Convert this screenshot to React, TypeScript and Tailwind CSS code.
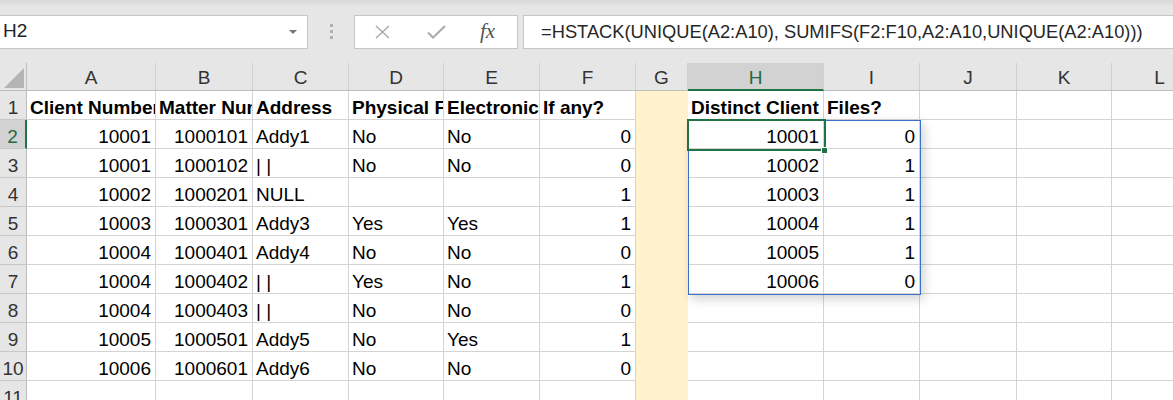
import clsx from "clsx";

const cols = [
  { k: "A", w: 129 },
  { k: "B", w: 97 },
  { k: "C", w: 96 },
  { k: "D", w: 95 },
  { k: "E", w: 96 },
  { k: "F", w: 96 },
  { k: "G", w: 52 },
  { k: "H", w: 136 },
  { k: "I", w: 96 },
  { k: "J", w: 97 },
  { k: "K", w: 95 },
  { k: "L", w: 96 },
  { k: "M", w: 96 },
];

type V = string | number;

const rows: V[][] = [
  ["Client Number", "Matter Number", "Address", "Physical Files", "Electronic Files", "If any?", "", "Distinct Client", "Files?"],
  [10001, 1000101, "Addy1", "No", "No", 0, "", 10001, 0],
  [10001, 1000102, "| |", "No", "No", 0, "", 10002, 1],
  [10002, 1000201, "NULL", "", "", 1, "", 10003, 1],
  [10003, 1000301, "Addy3", "Yes", "Yes", 1, "", 10004, 1],
  [10004, 1000401, "Addy4", "No", "No", 0, "", 10005, 1],
  [10004, 1000402, "| |", "Yes", "No", 1, "", 10006, 0],
  [10004, 1000403, "| |", "No", "No", 0],
  [10005, 1000501, "Addy5", "No", "Yes", 1],
  [10006, 1000601, "Addy6", "No", "No", 0],
  [],
];

function FormulaBar() {
  return (
    <div className="h-[63px] flex items-center bg-[linear-gradient(#d9d9d9,#e6e6e6_7px)]">
      <div className="w-[308px] h-[34px] bg-white border border-[#c6c6c6] border-l-0 flex items-center justify-between pl-[3px] pr-[10px] text-[19px] text-[#222]">
        <span>H2</span>
        <svg width="8" height="4" viewBox="0 0 8 4"><path d="M0 0h8L4 4z" fill="#777" /></svg>
      </div>
      <div className="w-[46px] flex flex-col items-center gap-[3px]">
        <div className="w-[3px] h-[3px] bg-[#b0b0b0]" />
        <div className="w-[3px] h-[3px] bg-[#b0b0b0]" />
        <div className="w-[3px] h-[3px] bg-[#b0b0b0]" />
      </div>
      <div className="w-[164px] h-[34px] bg-white border border-[#c6c6c6] flex items-center">
        <svg className="ml-[19px]" width="17" height="14" viewBox="0 0 17 14">
          <path d="M2 1L15 13M15 1L2 13" stroke="#ababab" strokeWidth="1.6" />
        </svg>
        <svg className="ml-[36px]" width="19" height="14" viewBox="0 0 19 14">
          <path d="M1 7.5L6 12.5L18 1" stroke="#ababab" strokeWidth="2" fill="none" />
        </svg>
        <span className="ml-[34px] italic text-[21px] text-[#555] leading-none" style={{ fontFamily: '"Liberation Serif", serif' }}>
          fx
        </span>
      </div>
      <div className="ml-[5px] flex-1 h-[34px] bg-white border border-[#c6c6c6] border-r-0 flex items-center pl-[17px] text-[18.3px] text-[#262626] whitespace-nowrap overflow-hidden">
        =HSTACK(UNIQUE(A2:A10), SUMIFS(F2:F10,A2:A10,UNIQUE(A2:A10)))
      </div>
    </div>
  );
}

export default function App() {
  return (
    <div className="w-[1173px] h-[400px] overflow-hidden bg-white text-black" style={{ fontFamily: '"Liberation Sans", Arial, sans-serif' }}>
      <FormulaBar />
      <div className="relative">
        {/* column headers */}
        <div className="flex h-[28px] bg-[#e6e6e6] border-b border-[#bdbdbd]">
          <div className="w-[27px] shrink-0 border-r border-[#bdbdbd] relative">
            <svg className="absolute left-[4px] top-[5px]" width="20" height="20" viewBox="0 0 20 20">
              <path d="M20 0V20H0z" fill="#b5b5b5" />
            </svg>
          </div>
          {cols.map((c) => (
            <div
              key={c.k}
              style={{ width: c.w }}
              className={clsx(
                "shrink-0 border-r border-[#d0d0d0] text-center text-[19px] pt-[3px] leading-[24px]",
                c.k === "H" ? "bg-[#d2d2d2] text-[#1e6b3f] border-b-2 border-b-[#217346] -mb-px" : "text-[#333]"
              )}
            >
              {c.k}
            </div>
          ))}
        </div>
        {/* rows */}
        {rows.map((r, i) => (
          <div key={i} className="flex h-[29px]">
            <div
              className={clsx(
                "w-[27px] shrink-0 border-b border-[#c8c8c8] text-center text-[19px] pt-[7px] leading-[20px] whitespace-nowrap overflow-hidden",
                i === 1 ? "bg-[#d2d2d2] text-[#1e6b3f] border-r-2 border-r-[#217346]" : "bg-[#e6e6e6] text-[#333] border-r border-r-[#bdbdbd]"
              )}
            >
              {i + 1}
            </div>
            {cols.map((c, j) => {
              const v = r[j] ?? "";
              const num = typeof v === "number";
              const yellow = c.k === "G";
              return (
                <div
                  key={c.k}
                  style={{ width: c.w }}
                  className={clsx(
                    "shrink-0 overflow-hidden whitespace-nowrap text-[19px] pt-[7px] leading-[20px] px-[4px]",
                    yellow ? "bg-[#fff2cc]" : "border-r border-b border-[#d4d4d4]",
                    num ? "text-right" : "text-left pl-[3px]",
                    i === 0 && "font-bold"
                  )}
                >
                  {v}
                </div>
              );
            })}
          </div>
        ))}
        {/* spill range */}
        <div className="absolute left-[688px] top-[57px] w-[233px] h-[175px] border border-[#3a72c9] shadow-[3px_4px_10px_rgba(0,0,0,0.18)] pointer-events-none" />
        {/* active cell */}
        <div className="absolute left-[687px] top-[56px] w-[139px] h-[32px] border-2 border-[#217346] pointer-events-none" />
        <div className="absolute left-[821px] top-[84px] w-[7px] h-[7px] bg-[#217346] border border-white pointer-events-none" />
      </div>
    </div>
  );
}
